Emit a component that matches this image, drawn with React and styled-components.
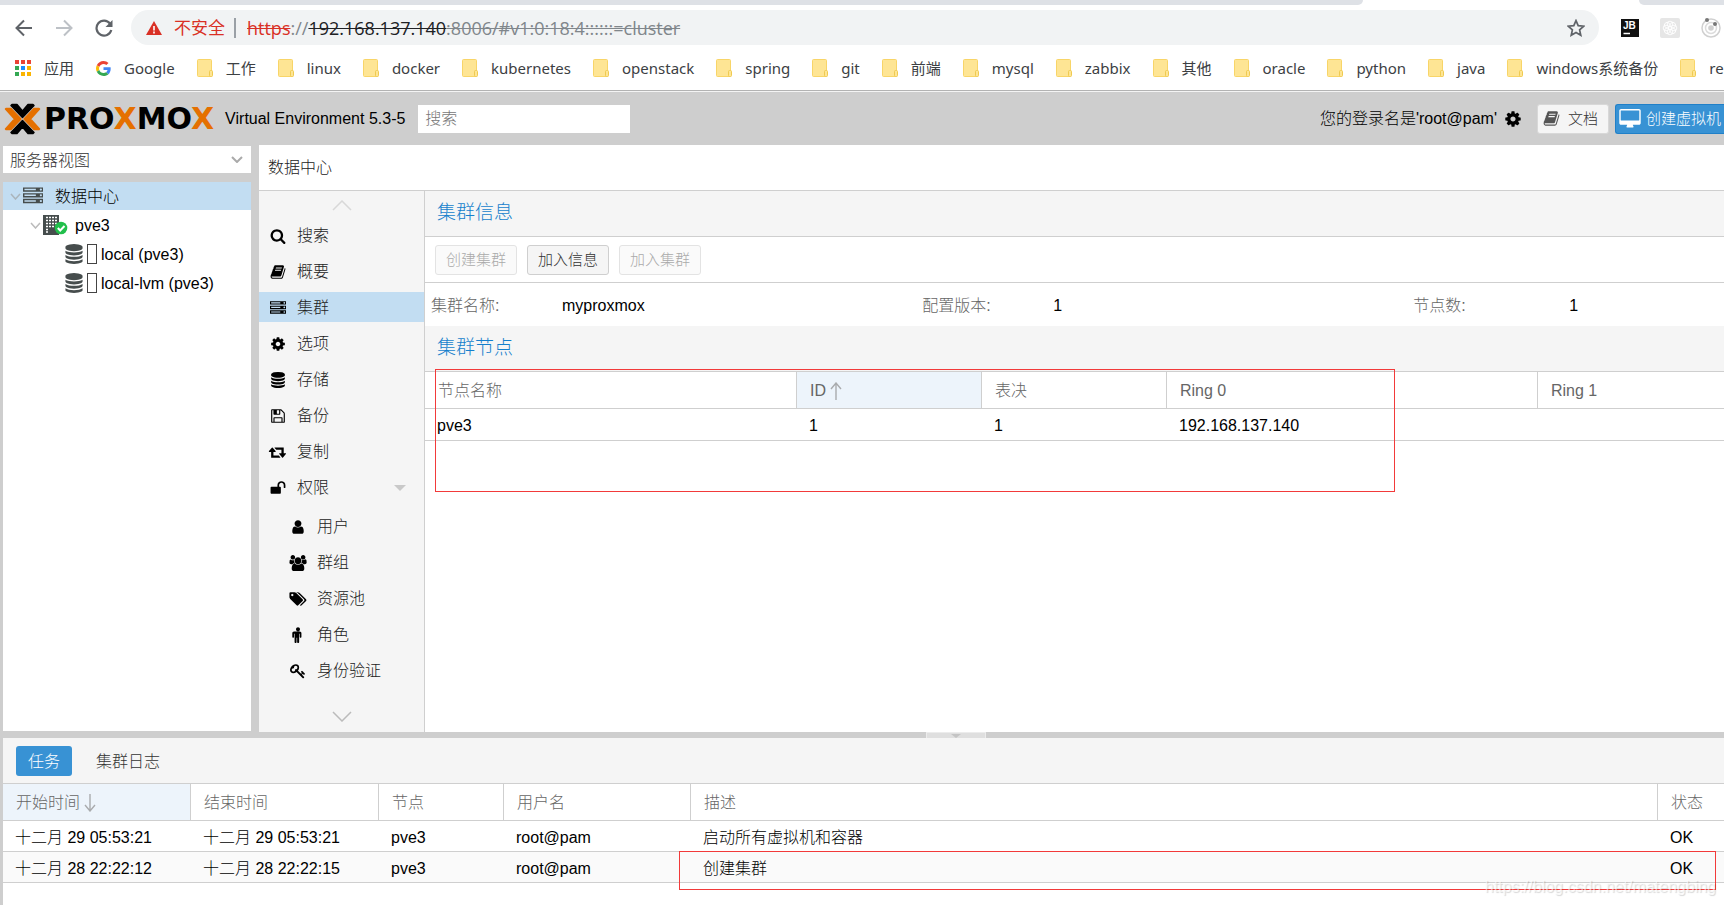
import React from "react";
import styled, { createGlobalStyle, css } from "styled-components";

const uiFont = `"Liberation Sans", "Noto Sans CJK SC", sans-serif`;
const chromeFont = `"Open Sans", "Noto Sans CJK SC", sans-serif`;
const bookmarkFont = `"Noto Sans", "Noto Sans CJK SC", sans-serif`;
const line = "#cfcfcf";
const grey = "#cecece";
const panel = "#f5f5f5";
const selected = "#c2ddf2";
const sorted = "#edf4fb";

const GlobalStyle = createGlobalStyle`
  * { box-sizing: border-box; }
  body { margin: 0; overflow: hidden; background: #fff; }
  button, input, select { font: inherit; color: inherit; }
  a { color: inherit; text-decoration: none; }
`;

/* ---------- icons ---------- */

const glyphs = {
  search: ["0 0 1792 1792", "M1216 832q0-185-131.5-316.5t-316.5-131.5-316.5 131.5-131.5 316.5 131.5 316.5 316.5 131.5 316.5-131.5 131.5-316.5zm512 832q0 52-38 90t-90 38q-54 0-90-38l-343-342q-179 124-399 124-143 0-273.5-55.5t-225-150-150-225-55.5-273.5 55.5-273.5 150-225 225-150 273.5-55.5 273.5 55.5 225 150 150 225 55.5 273.5q0 220-124 399l343 343q37 37 37 90z"],
  book: ["0 0 1792 1792", "M1703 478q40 57 18 129l-275 906q-19 64-76.5 107.5t-122.5 43.5h-923q-77 0-148.5-53.5t-99.5-131.5q-24-67-2-127 0-4 3-27t4-37q1-8-3-21.5t-3-19.5q2-11 8-21t16.5-23.5 16.5-23.5q23-38 45-91.5t30-91.5q3-10 .5-30t-.5-28q3-11 17-28t17-23q21-36 42-92t25-90q1-9-2.5-32t.5-28q4-13 22-30.5t22-22.5q19-26 42.5-84.5t27.5-96.5q1-8-3-25.5t-2-26.5q2-8 9-18t18-23 17-21q8-12 16.5-30.5t15-35 16-36 19.5-32 26.5-23.5 36-11.5 47.5 5.5l-1 3q38-9 51-9h761q74 0 114 56t18 130l-274 906q-36 119-71.5 153.5t-128.5 34.5h-869q-27 0-38 15-11 16-1 43 24 70 144 70h923q29 0 56-15.5t35-41.5l300-987q7-22 5-57 38 15 59 43zm-1064 2q-4 13 2 22.5t20 9.5h608q13 0 25.5-9.5t16.5-22.5l21-64q4-13-2-22.5t-20-9.5h-608q-13 0-25.5 9.5t-16.5 22.5zm-83 256q-4 13 2 22.5t20 9.5h608q13 0 25.5-9.5t16.5-22.5l21-64q4-13-2-22.5t-20-9.5h-608q-13 0-25.5 9.5t-16.5 22.5z"],
  cog: ["0 0 1792 1792", "M1152 896q0-106-75-181t-181-75-181 75-75 181 75 181 181 75 181-75 75-181zm512-109v222q0 12-8 23t-20 13l-185 28q-19 54-39 91 35 50 107 138 10 12 10 25t-9 23q-27 37-99 108t-94 71q-12 0-26-9l-138-108q-44 23-91 38-16 136-29 186-7 28-36 28h-222q-14 0-24.5-8.5t-11.5-21.5l-28-184q-49-16-90-37l-141 107q-10 9-25 9-14 0-25-11-126-114-165-168-7-10-7-23 0-12 8-23 15-21 51-66.5t54-70.5q-27-50-41-99l-183-27q-13-2-21-12.5t-8-23.5v-222q0-12 8-23t19-13l186-28q14-46 39-92-40-57-107-138-10-12-10-24 0-10 9-23 26-36 98.5-107.5t94.5-71.5q13 0 26 10l138 107q44-23 91-38 16-136 29-186 7-28 36-28h222q14 0 24.5 8.5t11.5 21.5l28 184q49 16 90 37l142-107q9-9 24-9 13 0 25 10 129 119 165 170 7 8 7 22 0 12-8 23-15 21-51 66.5t-54 70.5q26 50 41 98l183 28q13 2 21 12.5t8 23.5z"],
  database: ["0 0 1792 1792", "M896 768q237 0 443-43t325-127v170q0 69-103 128t-280 93.5-385 34.5-385-34.5-280-93.5-103-128v-170q119 84 325 127t443 43zm0 768q237 0 443-43t325-127v170q0 69-103 128t-280 93.5-385 34.5-385-34.5-280-93.5-103-128v-170q119 84 325 127t443 43zm0-384q237 0 443-43t325-127v170q0 69-103 128t-280 93.5-385 34.5-385-34.5-280-93.5-103-128v-170q119 84 325 127t443 43zm0-1152q208 0 385 34.5t280 93.5 103 128v128q0 69-103 128t-280 93.5-385 34.5-385-34.5-280-93.5-103-128v-128q0-69 103-128t280-93.5 385-34.5z"],
  server: ["0 0 1792 1792", "M128 1408h1024v-128h-1024v128zm0-512h1024v-128h-1024v128zm1568 448q0-40-28-68t-68-28-68 28-28 68 28 68 68 28 68-28 28-68zm-1568-960h1024v-128h-1024v128zm1568 448q0-40-28-68t-68-28-68 28-28 68 28 68 68 28 68-28 28-68zm0-512q0-40-28-68t-68-28-68 28-28 68 28 68 68 28 68-28 28-68zm96 832v384h-1792v-384h1792zm0-512v384h-1792v-384h1792zm0-512v384h-1792v-384h1792z"],
  floppy: ["0 0 1792 1792", "M512 1536h768v-384h-768v384zm896 0h128v-896q0-14-10-38.5t-20-34.5l-281-281q-10-10-34-20t-39-10v416q0 40-28 68t-68 28h-576q-40 0-68-28t-28-68v-416h-128v1280h128v-416q0-40 28-68t68-28h832q40 0 68 28t28 68v416zm-384-928v-320q0-13-9.5-22.5t-22.5-9.5h-192q-13 0-22.5 9.5t-9.5 22.5v320q0 13 9.5 22.5t22.5 9.5h192q13 0 22.5-9.5t9.5-22.5zm640 32v928q0 40-28 68t-68 28h-1344q-40 0-68-28t-28-68v-1344q0-40 28-68t68-28h928q40 0 88 20t76 48l280 280q28 28 48 76t20 88z"],
  retweet: ["0 0 1792 1792", "M1152 1504q0 13-9.5 22.5t-22.5 9.5h-960q-8 0-13.5-2t-9-7-5.5-8-3-11.5-1-11.5v-600h-192q-26 0-45-19t-19-45q0-24 15-41l320-384q19-22 49-22t49 22l320 384q15 17 15 41 0 26-19 45t-45 19h-192v384h576q16 0 25 11l160 192q7 10 7 21zm640-416q0 24-15 41l-320 384q-20 23-49 23t-49-23l-320-384q-15-17-15-41 0-26 19-45t45-19h192v-384h-576q-16 0-25-12l-160-192q-7-9-7-20 0-13 9.5-22.5t22.5-9.5h960q8 0 13.5 2t9 7 5.5 8 3 11.5 1 11.5v600h192q26 0 45 19t19 45z"],
  unlock: ["0 0 1792 1792", "M1728 576v256q0 26-19 45t-45 19h-64q-26 0-45-19t-19-45v-256q0-106-75-181t-181-75-181 75-75 181v192h96q40 0 68 28t28 68v576q0 40-28 68t-68 28h-960q-40 0-68-28t-28-68v-576q0-40 28-68t68-28h672v-192q0-185 131.5-316.5t316.5-131.5 316.5 131.5 131.5 316.5z"],
  user: ["0 0 1792 1792", "M1536 1399q0 109-62.5 187t-150.5 78h-854q-88 0-150.5-78t-62.5-187q0-85 8.5-160.5t31.5-152 58.5-131 94-89 134.5-34.5q131 128 313 128t313-128q76 0 134.5 34.5t94 89 58.5 131 31.5 152 8.5 160.5zm-256-887q0 159-112.5 271.5t-271.5 112.5-271.5-112.5-112.5-271.5 112.5-271.5 271.5-112.5 271.5 112.5 112.5 271.5z"],
  users: ["0 0 1792 1792", "M529 896q-162 5-265 128h-134q-82 0-138-40.5t-56-118.5q0-353 124-353 6 0 43.5 21t97.5 42.5 119 21.5q67 0 133-23-5 37-5 66 0 159 93 294zm1071 637q0 120-73 189.5t-194 69.5h-874q-121 0-194-69.5t-73-189.5q0-53 3.5-103.5t14-109 26.5-108.5 43-97.5 62-81 85.5-53.5 111.5-20q10 0 43 21.5t73 48 107 48 135 21.5 135-21.5 107-48 73-48 43-21.5q61 0 111.5 20t85.5 53.5 62 81 43 97.5 26.5 108.5 14 109 3.5 103.5zm-1024-1277q0 106-75 181t-181 75-181-75-75-181 75-181 181-75 181 75 75 181zm704 384q0 159-112.5 271.5t-271.5 112.5-271.5-112.5-112.5-271.5 112.5-271.5 271.5-112.5 271.5 112.5 112.5 271.5zm576 225q0 78-56 118.5t-138 40.5h-134q-103-123-265-128 93-135 93-294 0-29-5-66 66 23 133 23 59 0 119-21.5t97.5-42.5 43.5-21q124 0 124 353zm-128-609q0 106-75 181t-181 75-181-75-75-181 75-181 181-75 181 75 75 181z"],
  tags: ["64 0 1792 1792", "M448 448q0-53-37.5-90.5t-90.5-37.5-90.5 37.5-37.5 90.5 37.5 90.5 90.5 37.5 90.5-37.5 37.5-90.5zm1067 576q0 53-37 90l-491 492q-39 37-91 37-53 0-90-37l-715-716q-38-37-64.5-101t-26.5-117v-416q0-52 38-90t90-38h416q53 0 117 26.5t102 64.5l715 714q37 39 37 91zm384 0q0 53-37 90l-491 492q-39 37-91 37-36 0-59-14t-53-45l470-470q37-37 37-90 0-52-37-91l-715-714q-38-38-102-64.5t-117-26.5h224q53 0 117 26.5t102 64.5l715 714q37 39 37 91z"],
  male: ["0 0 1792 1792", "M1280 704v416q0 40-28 68t-68 28-68-28-28-68v-352h-64v912q0 46-33 79t-79 33-79-33-33-79v-464h-64v464q0 46-33 79t-79 33-79-33-33-79v-912h-64v352q0 40-28 68t-68 28-68-28-28-68v-416q0-80 56-136t136-56h640q80 0 136 56t56 136zm-160-448q0 93-65.5 158.5t-158.5 65.5-158.5-65.5-65.5-158.5 65.5-158.5 158.5-65.5 158.5 65.5 65.5 158.5z"],
  key: ["0 0 1792 1792", "M832 512q0-80-56-136t-136-56-136 56-56 136q0 42 19 83-41-19-83-19-80 0-136 56t-56 136 56 136 136 56 136-56 56-136q0-42-19-83 41 19 83 19 80 0 136-56t56-136zm851 704q0 17-49 66t-66 49q-9 0-28.5-16t-36.5-33-38.5-40-24.5-26l-96 96 220 220q28 28 28 68 0 42-39 81t-81 39q-40 0-68-28l-671-671q-176 131-365 131-163 0-265.5-102.5t-102.5-265.5q0-160 95-313t248-248 313-95q163 0 265.5 102.5t102.5 265.5q0 189-131 365l355 355 96-96q-3-3-26-24.5t-40-38.5-33-36.5-16-28.5q0-17 49-66t66-49q13 0 23 10 6 6 46 44.5t82 79.5 86.5 86 73 78 28.5 41z"],
  desktop: ["0 0 1792 1792", "M1728 992v-832q0-13-9.5-22.5t-22.5-9.5h-1600q-13 0-22.5 9.5t-9.5 22.5v832q0 13 9.5 22.5t22.5 9.5h1600q13 0 22.5-9.5t9.5-22.5zm128-832v1088q0 66-47 113t-113 47h-544q0 37 16 77.5t32 71 16 43.5q0 26-19 45t-45 19h-512q-26 0-45-19t-19-45q0-14 16-44t32-70 16-78h-544q-66 0-113-47t-47-113v-1088q0-66 47-113t113-47h1600q66 0 113 47t47 113z"],
};

const Glyph = styled.svg`
  display: block;
  flex: none;
  width: ${(p) => p.$size}px;
  height: ${(p) => p.$size}px;
  overflow: visible;
  fill: ${(p) => p.$color || "#000"};
`;

const Icon = ({ name, size = 16, color }) => (
  <Glyph $size={size} $color={color} viewBox={glyphs[name][0]} aria-hidden="true">
    <path d={glyphs[name][1]} />
  </Glyph>
);

const Drawing = styled.svg`
  display: block;
  flex: none;
  fill: none;
`;

const Chevron = ({ width, height, up, color, weight = 1.5 }) => (
  <Drawing width={width} height={height} viewBox={`0 0 ${width} ${height}`} aria-hidden="true">
    <path
      d={up ? `M1 ${height - 1}L${width / 2} 1L${width - 1} ${height - 1}` : `M1 1L${width / 2} ${height - 1}L${width - 1} 1`}
      stroke={color}
      strokeWidth={weight}
    />
  </Drawing>
);

const SortArrow = ({ up }) => (
  <Drawing width="12" height="18" viewBox="0 0 12 18" aria-hidden="true">
    <path d={up ? "M6 18V1M1 7L6 1L11 7" : "M6 0V17M1 11L6 17L11 11"} stroke="#a9abad" strokeWidth="1.4" />
  </Drawing>
);

/* ---------- browser bars ---------- */

const Page = styled.div`
  display: flex;
  flex-direction: column;
  height: 100vh;
  min-width: 1100px;
  overflow: hidden;
  background: ${grey};
  color: #000;
  font: 300 16px/20px ${uiFont};
`;

const TabStrip = styled.div`
  display: flex;
  flex: none;
  height: 5px;
  background: #fff;
`;

const TabEdge = styled.div`
  flex: ${(p) => p.$grow};
  background: #dee1e6;
  border-radius: ${(p) => (p.$side === "left" ? "0 0 6px 0" : "0 0 0 6px")};
`;

const TabGap = styled.div`
  flex: 276;
`;

const AddressRow = styled.div`
  display: flex;
  flex: none;
  align-items: center;
  height: 45px;
  padding-left: 15px;
  background: #fff;
`;

const NavButton = styled.button`
  flex: none;
  width: 20px;
  height: 20px;
  margin-right: 20px;
  padding: 0;
  border: 0;
  background: none;
`;

const AddressBar = styled.div`
  display: flex;
  flex: 1;
  align-items: center;
  height: 35px;
  margin-right: 22px;
  margin-left: -4px;
  padding: 0 14px 0 15px;
  border-radius: 18px;
  background: #f1f3f4;
  color: #80868b;
  font: 400 17px/24px ${chromeFont};
`;

const Warning = styled.span`
  margin-left: 12px;
  padding-right: 9px;
  color: #d93025;
`;

const Divider = styled.span`
  width: 2px;
  height: 20px;
  margin-right: 11px;
  background: #9aa0a6;
`;

const Url = styled.span`
  flex: 1;
  white-space: nowrap;
  font-size: 18px;
`;

const Struck = styled.s`
  color: ${(p) => p.$color};
`;

const Extensions = styled.div`
  display: flex;
  flex: none;
  align-items: center;
  gap: 21px;
  margin-right: 1px;
`;

const Bookmarks = styled.nav`
  display: flex;
  flex: none;
  align-items: center;
  gap: 22px;
  height: 40px;
  padding: 0 0 4px 15px;
  overflow: hidden;
  background: #fff;
  color: #3c4043;
  font: 400 15px/20px ${bookmarkFont};
`;

const Bookmark = styled.a`
  display: flex;
  flex: none;
  align-items: center;
  gap: 13px;
  white-space: nowrap;
`;

const ChromeEdge = styled.div`
  flex: none;
  height: 2px;
  border-top: 1px solid #b3b3b3;
  background: #f4f4f4;
`;

const Folder = () => (
  <Drawing width="16" height="18" viewBox="0 0 16 18" aria-hidden="true">
    <rect x="0.5" y="0.5" width="14" height="17" rx="1" fill="#fee594" stroke="#f8d568" />
    <rect x="12.5" y="11.5" width="3" height="6" rx="1" fill="#fee594" stroke="#efca51" />
  </Drawing>
);

const AppsGrid = () => (
  <Drawing width="16" height="16" viewBox="0 0 16 16" aria-hidden="true">
    {["#ea4335", "#ea4335", "#ea4335", "#34a853", "#1a8cff", "#fbb400", "#34a853", "#fbb400", "#fbb400"].map((c, i) => (
      <rect key={i} x={(i % 3) * 6} y={Math.floor(i / 3) * 6} width="4" height="4" fill={c} />
    ))}
  </Drawing>
);

const GoogleMark = () => (
  <Drawing width="15" height="15" viewBox="0 0 48 48" aria-hidden="true">
    <path fill="#EA4335" d="M24 9.5c3.54 0 6.71 1.22 9.21 3.6l6.85-6.85C35.9 2.38 30.47 0 24 0 14.62 0 6.51 5.38 2.56 13.22l7.98 6.19C12.43 13.72 17.74 9.5 24 9.5z" />
    <path fill="#4285F4" d="M46.98 24.55c0-1.57-.15-3.09-.38-4.55H24v9.02h12.94c-.58 2.96-2.26 5.48-4.78 7.18l7.73 6c4.51-4.18 7.09-10.36 7.09-17.65z" />
    <path fill="#FBBC05" d="M10.53 28.59c-.48-1.45-.76-2.99-.76-4.59s.27-3.14.76-4.59l-7.98-6.19C.92 16.46 0 20.12 0 24c0 3.88.92 7.54 2.56 10.78l7.97-6.19z" />
    <path fill="#34A853" d="M24 48c6.48 0 11.93-2.13 15.89-5.81l-7.73-6c-2.15 1.45-4.92 2.3-8.16 2.3-6.26 0-11.57-4.22-13.47-9.91l-7.98 6.19C6.51 42.62 14.62 48 24 48z" />
  </Drawing>
);

const folders = ["工作", "linux", "docker", "kubernetes", "openstack", "spring", "git", "前端", "mysql", "zabbix", "其他", "oracle", "python", "java", "windows系统备份", "re"];

const Browser = () => (
  <>
    <TabStrip>
      <TabEdge $grow={1363} $side="left" />
      <TabGap />
      <TabEdge $grow={85} $side="right" />
    </TabStrip>
    <AddressRow>
      <NavButton aria-label="back">
        <Drawing width="18" height="20" viewBox="0 0 18 20"><path d="M17 10H2M9 2.5L1.5 10L9 17.5" stroke="#5f6368" strokeWidth="2" /></Drawing>
      </NavButton>
      <NavButton aria-label="forward">
        <Drawing width="18" height="20" viewBox="0 0 18 20"><path d="M1 10H16M9 2.5L16.5 10L9 17.5" stroke="#bdc1c6" strokeWidth="2" /></Drawing>
      </NavButton>
      <NavButton aria-label="reload">
        <Drawing width="18" height="18" viewBox="0 0 18 18">
          <path d="M15 4.5A7.5 7.5 0 1 0 16.3 11" stroke="#5f6368" strokeWidth="2.2" />
          <path d="M17.5 1v7h-7z" fill="#5f6368" />
        </Drawing>
      </NavButton>
      <AddressBar>
        <Drawing width="16" height="14" viewBox="0 0 16 14">
          <path d="M8 0L16 14H0z" fill="#d93025" />
          <path d="M8 5v4.5M8 10.5v2" stroke="#fff" strokeWidth="1.6" />
        </Drawing>
        <Warning>不安全</Warning>
        <Divider />
        <Url>
          <Struck $color="#d93025">https</Struck>://<Struck $color="#202124">192.168.137.140</Struck>
          <Struck $color="#80868b">:8006/#v1:0:18:4::::::=cluster</Struck>
        </Url>
        <Drawing width="18" height="18" viewBox="0 0 18 18">
          <path d="M9 1.6L11.2 6.7L16.8 7.2L12.6 10.9L13.8 16.3L9 13.5L4.2 16.3L5.4 10.9L1.2 7.2L6.8 6.7z" stroke="#5f6368" strokeWidth="1.7" />
        </Drawing>
      </AddressBar>
      <Extensions>
        <Drawing width="18" height="18" viewBox="0 0 18 18">
          <rect width="18" height="18" fill="#111" />
          <text x="2" y="10" fill="#fff" fontFamily="Liberation Sans" fontWeight="700" fontSize="10">JB</text>
          <path d="M2.500 14.500H9" stroke="#fff" strokeWidth="1.500" />
        </Drawing>
        <Drawing width="20" height="20" viewBox="0 0 20 20">
          <rect width="20" height="20" rx="2" fill="#e6e6e6" />
          {[0, 45, 90, 135, 180, 225, 270, 315].map((a) => (
            <circle key={a} cx="10" cy="6" r="2.800" stroke="#fff" strokeWidth="0.900" transform={`rotate(${a} 10 10)`} />
          ))}
        </Drawing>
        <Drawing width="22" height="20" viewBox="0 0 22 20">
          <circle cx="10" cy="10" r="9" stroke="#d0d0d0" strokeWidth="1.500" />
          <circle cx="10" cy="10" r="5.500" stroke="#dcdcdc" strokeWidth="1.500" />
          <circle cx="10" cy="10" r="2.800" fill="#d0d0d0" />
          <circle cx="6" cy="2" r="2" fill="#777" />
          <circle cx="14" cy="6" r="2" fill="#777" />
        </Drawing>
      </Extensions>
    </AddressRow>
    <Bookmarks>
      <Bookmark href="#apps"><AppsGrid />应用</Bookmark>
      <Bookmark href="#google"><GoogleMark />Google</Bookmark>
      {folders.map((name) => (
        <Bookmark key={name} href={`#${name}`}><Folder />{name}</Bookmark>
      ))}
    </Bookmarks>
    <ChromeEdge />
  </>
);

/* ---------- application header ---------- */

const Header = styled.header`
  display: flex;
  flex: none;
  align-items: center;
  height: 53px;
  padding-left: 4px;
`;

const Wordmark = styled.span`
  margin-left: 3px;
  color: #000;
  font: 700 30px/32px "DejaVu Sans", sans-serif;
`;

const Accent = styled.span`
  color: #e57000;
`;

const Version = styled.span`
  margin: 0 13px 0 11px;
  white-space: nowrap;
`;

const SearchInput = styled.input`
  width: 212px;
  height: 28px;
  padding: 0 7px;
  border: 0;
  background: #fff;
  outline: none;
  &::placeholder { color: #777; opacity: 1; }
`;

const Login = styled.span`
  margin: 0 7px 0 auto;
  white-space: nowrap;
`;

const IconButton = styled.button`
  display: flex;
  padding: 0;
  border: 0;
  background: none;
`;

const HeaderButton = styled.button`
  display: flex;
  flex: none;
  align-items: center;
  height: 30px;
  white-space: nowrap;
  font-size: 15px;
  ${(p) =>
    p.$primary
      ? css`
          gap: 6px;
          margin-left: 6px;
          padding: 0 3px 0 4px;
          border: 1px solid #2080c8;
          border-right: 0;
          border-radius: 3px 0 0 3px;
          background: #3892d4;
          color: #fff;
        `
      : css`
          gap: 8px;
          margin-left: 15px;
          padding: 0 10px 0 5px;
          border: 1px solid #d8d8d8;
          border-radius: 3px;
          background: ${panel};
          color: #333;
        `}
`;

const LogoMark = () => (
  <Drawing width="37" height="32" viewBox="0 0 37 32" aria-hidden="true">
    <g strokeLinejoin="round" strokeWidth="1.5">
      <path d="M8 1.500H13L18.500 8L24 1.500H29L30 2.500L18.500 14.500L7 2.500z" fill="#000" stroke="#000" />
      <path d="M8 30.500H13L18.500 24L24 30.500H29L30 29.500L18.500 17.500L7 29.500z" fill="#000" stroke="#000" />
      <path d="M2 5.500H7L17 16L7 26.500H2L1.500 26L10.500 16L1.500 6z" fill="#e57000" stroke="#e57000" />
      <path d="M35 5.500H30L20 16L30 26.500H35L35.500 26L26.500 16L35.500 6z" fill="#e57000" stroke="#e57000" />
    </g>
  </Drawing>
);

const AppHeader = () => (
  <Header>
    <LogoMark />
    <Wordmark>PRO<Accent>X</Accent>MO<Accent>X</Accent></Wordmark>
    <Version>Virtual Environment 5.3-5</Version>
    <SearchInput placeholder="搜索" aria-label="搜索" />
    <Login>您的登录名是'root@pam'</Login>
    <IconButton aria-label="settings"><Icon name="cog" size={18} /></IconButton>
    <HeaderButton><Icon name="book" size={17} color="#555" />文档</HeaderButton>
    <HeaderButton $primary><Icon name="desktop" size={20} color="#fff" />创建虚拟机</HeaderButton>
  </Header>
);

/* ---------- resource tree ---------- */

const Workspace = styled.div`
  display: flex;
  flex: 1;
  min-height: 0;
`;

const Sidebar = styled.aside`
  display: flex;
  flex: none;
  flex-direction: column;
  gap: 9px;
  width: 248px;
  margin: 1px 8px 1px 3px;
`;

const ViewField = styled.div`
  display: flex;
  flex: none;
  align-items: center;
  height: 27px;
  padding-right: 8px;
  background: #fff;
`;

const ViewSelect = styled.select`
  flex: 1;
  height: 27px;
  padding: 2px 7px 0;
  border: 0;
  appearance: none;
  background: none;
  color: #333;
`;

const Tree = styled.ul`
  flex: 1;
  margin: 0;
  padding: 0;
  background: #fff;
  list-style: none;
`;

const TreeRow = styled.li`
  display: flex;
  align-items: center;
  height: 28px;
  margin-bottom: 1px;
  padding-left: ${(p) => p.$indent}px;
  background: ${(p) => (p.$selected ? selected : "transparent")};
`;

const TreeIcon = styled.span`
  display: flex;
  margin-left: 2px;
`;

const TreeLabel = styled.span`
  padding-top: 1px;
  margin-left: ${(p) => p.$gap}px;
`;

const MissingGlyph = styled.span`
  width: 10px;
  height: 20px;
  margin-left: 3px;
  border: 1px solid #444;
`;

const NodeOnline = () => (
  <Drawing width="25" height="20" viewBox="0 0 25 20" aria-hidden="true">
    <path d="M0 0h16v20H0z" fill="#464d4d" />
    {[2, 5, 8, 11].map((y) => (
      <path key={y} d={`M3 ${y + 0.500}h2m1 0h2m1 0h2m1 0h2`} stroke="#fff" strokeWidth="1.500" />
    ))}
    <path d="M3 14.500h2M3 17h2" stroke="#fff" strokeWidth="1.500" />
    <circle cx="18" cy="13" r="6.300" fill="#21bf4b" />
    <path d="M14.800 13L17.200 15.500L21.500 11" stroke="#fff" strokeWidth="2" />
  </Drawing>
);

const ResourceTree = () => (
  <Sidebar>
    <ViewField>
      <ViewSelect aria-label="视图" defaultValue="server">
        <option value="server">服务器视图</option>
      </ViewSelect>
      <Chevron width={12} height={7} color="#aaa" weight={2} />
    </ViewField>
    <Tree>
      <TreeRow $indent={7} $selected>
        <Chevron width={11} height={7} color="#aab4bb" />
        <TreeIcon><Icon name="server" size={20} color="#464d4d" /></TreeIcon>
        <TreeLabel $gap={12}>数据中心</TreeLabel>
      </TreeRow>
      <TreeRow $indent={27}>
        <Chevron width={11} height={7} color="#bbb" />
        <TreeIcon><NodeOnline /></TreeIcon>
        <TreeLabel $gap={7}>pve3</TreeLabel>
      </TreeRow>
      {["local (pve3)", "local-lvm (pve3)"].map((name) => (
        <TreeRow key={name} $indent={59}>
          <TreeIcon><Icon name="database" size={20} color="#464d4d" /></TreeIcon>
          <MissingGlyph />
          <TreeLabel $gap={4}>{name}</TreeLabel>
        </TreeRow>
      ))}
    </Tree>
  </Sidebar>
);

/* ---------- data centre panel ---------- */

const CenterPanel = styled.main`
  display: flex;
  flex: 1;
  flex-direction: column;
  min-width: 0;
  background: #fff;
`;

const CenterTitle = styled.div`
  flex: none;
  height: 46px;
  padding: 13px 9px;
  border-bottom: 1px solid ${line};
  color: #222;
`;

const CenterBody = styled.div`
  display: flex;
  flex: 1;
  min-height: 0;
`;

const Menu = styled.nav`
  display: flex;
  flex: none;
  flex-direction: column;
  width: 166px;
  border-right: 1px solid ${line};
  background: ${panel};
`;

const MenuScroll = styled.button`
  display: flex;
  flex: none;
  align-items: center;
  justify-content: center;
  height: 29px;
  padding: 0;
  border: 0;
  background: none;
`;

const MenuItem = styled.a`
  display: flex;
  flex: none;
  align-items: center;
  gap: 11px;
  height: 30px;
  margin-bottom: 6px;
  padding: 2px 18px 0 ${(p) => (p.$sub ? 31 : 11)}px;
  background: ${(p) => (p.$selected ? selected : "transparent")};
  color: #222;
`;

const SubMenu = styled.div`
  padding: 3px 0 11px;
`;

const Triangle = styled.span`
  margin-left: auto;
  border: 6px solid transparent;
  border-top-color: #c9c9c9;
  border-bottom: 0;
`;

const Content = styled.section`
  flex: 1;
  min-width: 0;
  overflow: hidden;
`;

const SectionTitle = styled.h2`
  height: 46px;
  margin: 0;
  padding: 9px 12px;
  border-bottom: 1px solid ${line};
  background: ${panel};
  color: #157fcc;
  font: 300 19px/26px ${uiFont};
`;

const Toolbar = styled.div`
  display: flex;
  align-items: center;
  gap: 10px;
  height: 46px;
  padding: 0 10px;
  border-bottom: 1px solid ${line};
`;

const ToolButton = styled.button`
  height: 30px;
  padding: 0 10px;
  border: 1px solid #cfcfcf;
  border-radius: 3px;
  background: ${panel};
  color: #333;
  font-size: 15px;
  &:disabled { border-color: #e3e3e3; background: #fafafa; color: #aaa; }
`;

const Facts = styled.dl`
  display: grid;
  grid-template-columns: 49fr 49fr 31fr;
  align-items: center;
  height: 43px;
  margin: 0;
  padding: 3px 0 0 6px;
`;

const Fact = styled.div`
  display: flex;
`;

const FactName = styled.dt`
  width: ${(p) => (p.$wide ? 156 : 131)}px;
  color: #666;
`;

const FactValue = styled.dd`
  margin: 0;
`;

const Annotated = styled.div`
  position: relative;
`;

const Annotation = styled.div`
  position: absolute;
  border: 1px solid #f23a3a;
  pointer-events: none;
  ${(p) => p.$area}
`;

const nodesArea = css`
  top: -3px;
  left: 10px;
  width: 960px;
  height: 123px;
`;

const taskArea = css`
  right: 8px;
  bottom: -7px;
  left: 676px;
  height: 39px;
`;

const Table = styled.table`
  width: 100%;
  border-collapse: separate;
  border-spacing: 0;
  table-layout: fixed;
`;

const HeadCell = styled.th`
  height: 37px;
  padding: 1px 0 0 13px;
  border-right: 1px solid ${line};
  border-bottom: 1px solid ${line};
  background: ${(p) => (p.$sorted ? sorted : "#fff")};
  color: #666;
  font-weight: 300;
  text-align: left;
  &:last-child { border-right: 0; }
`;

const HeadLabel = styled.span`
  display: flex;
  align-items: center;
  gap: 4px;
`;

const Cell = styled.td`
  height: ${(p) => p.$height}px;
  padding: 3px 0 0 12px;
  border-bottom: 1px solid ${line};
  background: ${(p) => (p.$striped ? "#fafafa" : "#fff")};
  white-space: nowrap;
`;

const menu = [["search", "搜索"], ["book", "概要"], ["server", "集群"], ["cog", "选项"], ["database", "存储"], ["floppy", "备份"], ["retweet", "复制"], ["unlock", "权限"]];
const permissions = [["user", "用户"], ["users", "群组"], ["tags", "资源池"], ["male", "角色"], ["key", "身份验证"]];

const Grid = ({ columns, rows, sortKey, sortUp, rowHeight }) => (
  <Table>
    <colgroup>
      {columns.map(([name, width]) => <col key={name} width={width} />)}
    </colgroup>
    <thead>
      <tr>
        {columns.map(([name]) => (
          <HeadCell key={name} scope="col" $sorted={name === sortKey}>
            <HeadLabel>{name}{name === sortKey && <SortArrow up={sortUp} />}</HeadLabel>
          </HeadCell>
        ))}
      </tr>
    </thead>
    <tbody>
      {rows.map((row, r) => (
        <tr key={r}>
          {row.map((value, c) => <Cell key={c} $height={rowHeight} $striped={r % 2 === 1}>{value}</Cell>)}
        </tr>
      ))}
    </tbody>
  </Table>
);

const DataCenter = () => (
  <CenterPanel>
    <CenterTitle>数据中心</CenterTitle>
    <CenterBody>
      <Menu>
        <MenuScroll aria-label="scroll up"><Chevron width={20} height={11} up color="#d8d8d8" /></MenuScroll>
        {menu.map(([icon, label]) => (
          <MenuItem key={label} href={`#${icon}`} $selected={icon === "server"}>
            <Icon name={icon} />
            {label}
            {icon === "unlock" && <Triangle />}
          </MenuItem>
        ))}
        <SubMenu>
          {permissions.map(([icon, label]) => (
            <MenuItem key={label} href={`#${icon}`} $sub>
              <Icon name={icon} />
              {label}
            </MenuItem>
          ))}
        </SubMenu>
        <MenuScroll aria-label="scroll down"><Chevron width={20} height={11} color="#bbb" /></MenuScroll>
      </Menu>
      <Content>
        <SectionTitle>集群信息</SectionTitle>
        <Toolbar>
          <ToolButton disabled>创建集群</ToolButton>
          <ToolButton>加入信息</ToolButton>
          <ToolButton disabled>加入集群</ToolButton>
        </Toolbar>
        <Facts>
          <Fact><FactName>集群名称:</FactName><FactValue>myproxmox</FactValue></Fact>
          <Fact><FactName>配置版本:</FactName><FactValue>1</FactValue></Fact>
          <Fact><FactName $wide>节点数:</FactName><FactValue>1</FactValue></Fact>
        </Facts>
        <SectionTitle>集群节点</SectionTitle>
        <Annotated>
          <Grid
            columns={[["节点名称", 372], ["ID", 185], ["表决", 185], ["Ring 0", 371], ["Ring 1"]]}
            rows={[["pve3", "1", "1", "192.168.137.140", ""]]}
            sortKey="ID"
            sortUp
            rowHeight={32}
          />
          <Annotation $area={nodesArea} />
        </Annotated>
      </Content>
    </CenterBody>
  </CenterPanel>
);

/* ---------- task log ---------- */

const Splitter = styled.div`
  display: flex;
  flex: none;
  justify-content: center;
  height: 6px;
  padding-left: 188px;
`;

const SplitHandle = styled.button`
  display: flex;
  align-items: flex-end;
  justify-content: center;
  width: 60px;
  height: 6px;
  padding: 0;
  border: 1px solid #ececec;
  border-bottom: 0;
  background: #dfdfdf;
`;

const SplitTriangle = styled.span`
  border: 5px solid transparent;
  border-top: 4px solid #c4c4c4;
  border-bottom: 0;
`;

const LogPanel = styled.section`
  position: relative;
  flex: none;
  height: 167px;
  margin-left: 3px;
  background: #fff;
`;

const Tabs = styled.div`
  display: flex;
  align-items: center;
  gap: 12px;
  height: 46px;
  padding: 0 13px;
  border-bottom: 1px solid ${line};
  background: ${panel};
`;

const Tab = styled.button`
  height: 30px;
  padding: 2px 12px 0;
  border: 0;
  border-radius: 3px;
  background: ${(p) => (p.$active ? "#3892d4" : "transparent")};
  color: ${(p) => (p.$active ? "#fff" : "#333")};
`;

const Watermark = styled.span`
  position: absolute;
  right: 8px;
  bottom: 8px;
  color: rgba(255, 255, 255, 0.6);
  font-size: 16px;
  text-shadow: 1px 1px 1px rgba(0, 0, 0, 0.16);
`;

const TaskLog = () => (
  <LogPanel>
    <Tabs>
      <Tab $active>任务</Tab>
      <Tab>集群日志</Tab>
    </Tabs>
    <Annotated>
      <Grid
        columns={[["开始时间", 188], ["结束时间", 188], ["节点", 125], ["用户名", 187], ["描述"], ["状态", 66]]}
        rows={[
          ["十二月 29 05:53:21", "十二月 29 05:53:21", "pve3", "root@pam", "启动所有虚拟机和容器", "OK"],
          ["十二月 28 22:22:12", "十二月 28 22:22:15", "pve3", "root@pam", "创建集群", "OK"],
        ]}
        sortKey="开始时间"
        rowHeight={31}
      />
      <Annotation $area={taskArea} />
    </Annotated>
    <Watermark>https://blog.csdn.net/matengbing</Watermark>
  </LogPanel>
);

export default function App() {
  return (
    <Page>
      <GlobalStyle />
      <Browser />
      <AppHeader />
      <Workspace>
        <ResourceTree />
        <DataCenter />
      </Workspace>
      <Splitter>
        <SplitHandle aria-label="collapse"><SplitTriangle /></SplitHandle>
      </Splitter>
      <TaskLog />
    </Page>
  );
}
